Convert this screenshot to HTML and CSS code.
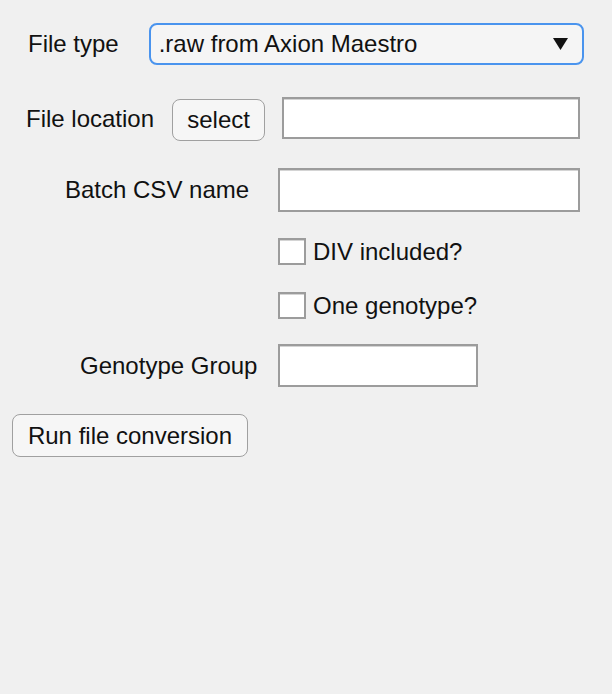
FILE: index.html
```html
<!DOCTYPE html>
<html lang="en">
<head>
<meta charset="utf-8">
<title>File conversion</title>
<link rel="stylesheet" href="styles.css">
</head>
<body>
<main class="panel">
  <div class="row row-type">
    <span class="label">File type</span>
    <div class="dropdown">
      <span class="dropdown-value">.raw from Axion Maestro</span>
      <svg class="caret" width="15" height="12" viewBox="0 0 15 12"><polygon points="0,0 15,0 7.5,12" fill="#111"/></svg>
    </div>
  </div>
  <div class="row row-location">
    <span class="label">File location</span>
    <button class="btn btn-select">select</button>
    <div class="field field-location"></div>
  </div>
  <div class="row row-batch">
    <span class="label">Batch CSV name</span>
    <div class="field field-batch"></div>
  </div>
  <div class="row row-check row-div">
    <span class="checkbox"></span>
    <span class="check-label">DIV included?</span>
  </div>
  <div class="row row-check row-one">
    <span class="checkbox"></span>
    <span class="check-label">One genotype?</span>
  </div>
  <div class="row row-group">
    <span class="label">Genotype Group</span>
    <div class="field field-group"></div>
  </div>
  <div class="row row-run">
    <button class="btn btn-run">Run file conversion</button>
  </div>
</main>
</body>
</html>
```

FILE: styles.css
```css
html, body {
  margin: 0;
  padding: 0;
  background: #f0f0f0;
}
body {
  width: 612px;
  height: 694px;
  font-family: "Liberation Sans", Arial, sans-serif;
  font-size: 24px;
  color: #111;
}
.panel {
  display: flex;
  flex-direction: column;
  padding-top: 23px;
}
.row {
  display: flex;
  align-items: center;
}
.label {
  white-space: nowrap;
}

/* row 1 */
.row-type {
  height: 42px;
  padding-left: 28px;
}
.row-type .label {
  margin-right: 30px;
}
.dropdown {
  box-sizing: border-box;
  width: 435px;
  height: 42px;
  border: 2px solid #4a94ee;
  border-radius: 8px;
  background: #f5f5f5;
  display: flex;
  align-items: center;
  justify-content: space-between;
  padding: 0 14px 0 8px;
}

/* row 2 */
.row-location {
  margin-top: 32px;
  height: 44px;
  padding-left: 26px;
}
.row-location .label {
  margin-right: 18px;
}
.btn {
  box-sizing: border-box;
  font-family: inherit;
  font-size: 24px;
  color: #111;
  background: #f6f6f6;
  border: 1.5px solid #a0a0a0;
  border-radius: 8px;
  padding: 0;
  margin: 0;
}
.btn-select {
  width: 93px;
  height: 42px;
  margin-top: 2px;
  margin-right: 17px;
}
.field {
  box-sizing: border-box;
  background: #fff;
  border: 2px solid #9c9c9c;
  box-shadow: inset 0 1px 0 #d4d4d4;
}
.field-location {
  width: 298px;
  height: 42px;
  margin-top: -2px;
}

/* row 3 */
.row-batch {
  margin-top: 27px;
  height: 44px;
  padding-left: 65px;
}
.row-batch .label {
  margin-right: 29px;
}
.field-batch {
  width: 302px;
  height: 44px;
}

/* checkboxes */
.row-check {
  height: 27px;
  padding-left: 278px;
}
.row-div {
  margin-top: 26px;
}
.row-one {
  margin-top: 27px;
}
.checkbox {
  box-sizing: border-box;
  width: 28px;
  height: 27px;
  background: #fff;
  border: 2px solid #9c9c9c;
  box-shadow: inset 0 1px 0 #d4d4d4;
  margin-right: 7px;
}
.check-label {
  white-space: nowrap;
}

/* row 6 */
.row-group {
  margin-top: 25px;
  height: 43px;
  padding-left: 80px;
}
.row-group .label {
  margin-right: 21px;
}
.field-group {
  width: 200px;
  height: 43px;
}

/* row 7 */
.row-run {
  margin-top: 27px;
  height: 43px;
  padding-left: 12px;
}
.btn-run {
  width: 236px;
  height: 43px;
}
```
